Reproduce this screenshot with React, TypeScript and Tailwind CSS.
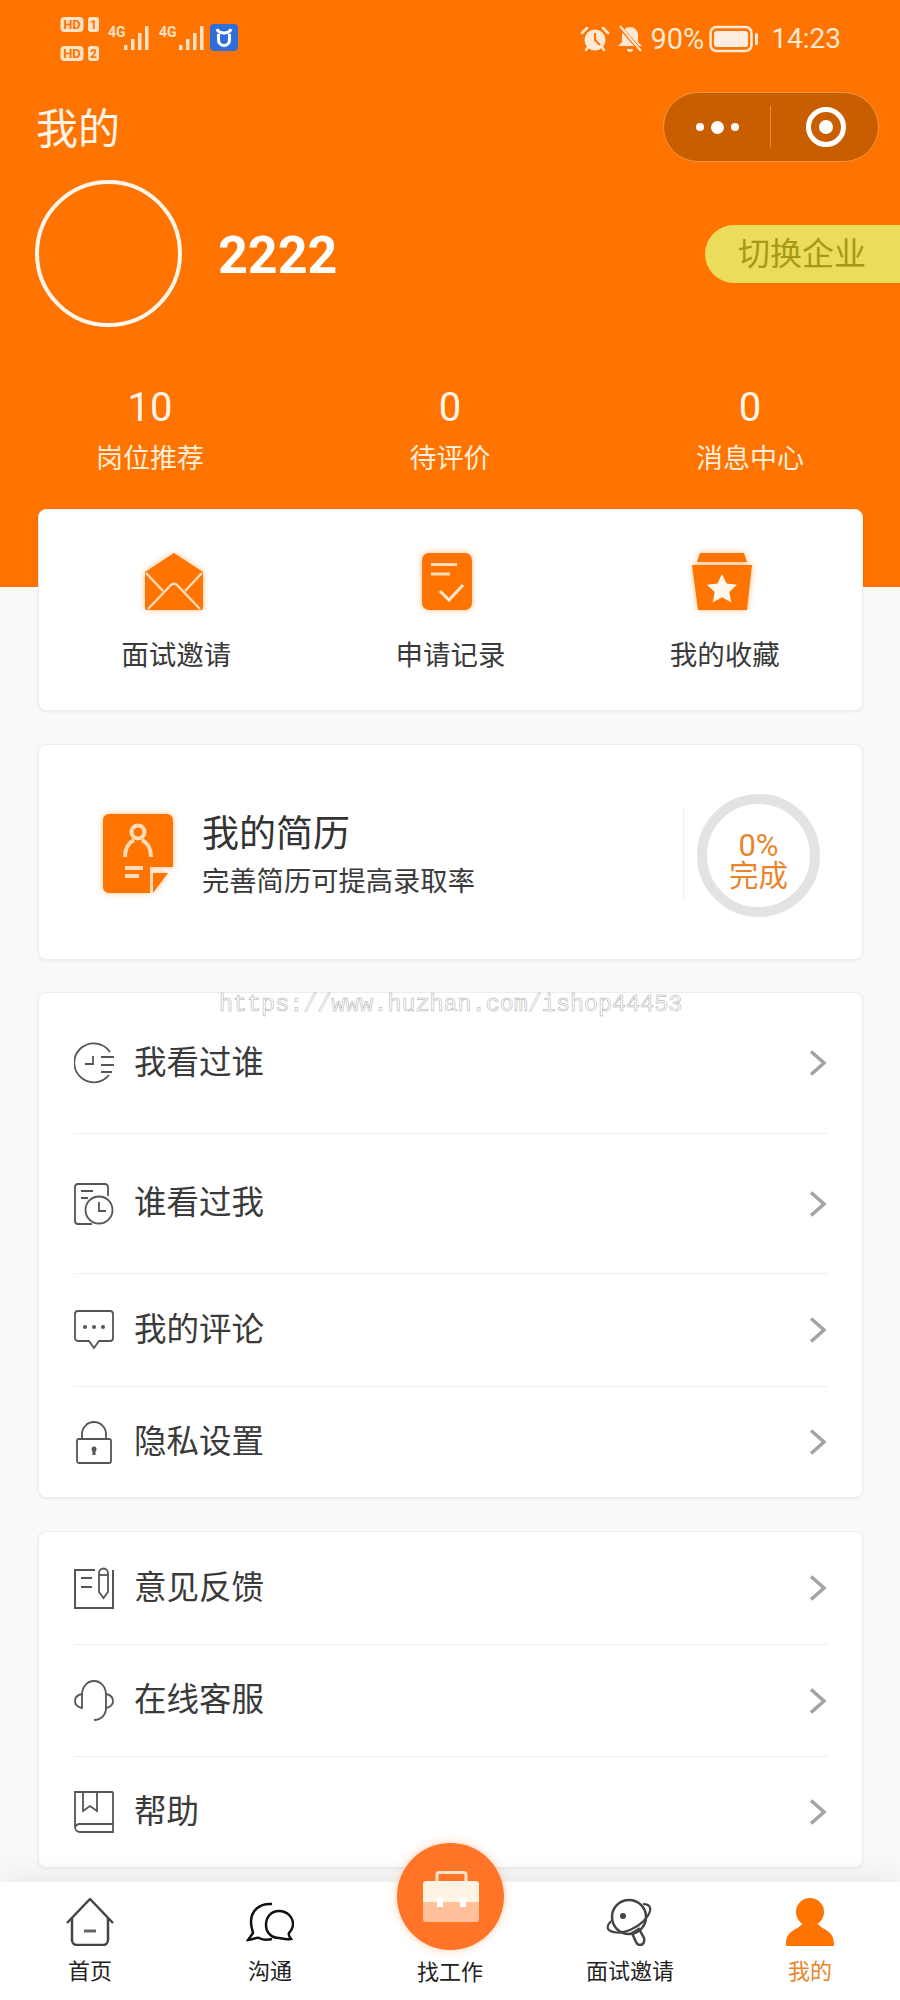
import React from "react";

const CJK = "font-['Roboto','Noto_Sans_CJK_SC',sans-serif]";

function StatusLeft() {
  const bars = (x: number, base: number) => [0, 1, 2, 3].map((i) => {
    const h = [5, 11, 17, 24][i];
    return <rect key={i} x={x + i * 7} y={base - h} width="3.5" height={h} fill="#ffe3c4" />;
  });
  return (
    <svg width="180" height="46" viewBox="0 0 180 46" className="ml-[60px] shrink-0">
      <rect x="0.5" y="1" width="23" height="15" rx="4" fill="#ffe3c4" />
      <text x="12" y="13" textAnchor="middle" fontSize="13" fontWeight="700" fill="#ff7300" fontFamily="Roboto">HD</text>
      <rect x="28" y="1" width="11" height="15" rx="3" fill="#ffe3c4" />
      <text x="33.5" y="13" textAnchor="middle" fontSize="12" fontWeight="700" fill="#ff7300" fontFamily="Roboto">1</text>
      <rect x="0.5" y="30" width="23" height="15" rx="4" fill="#ffe3c4" />
      <text x="12" y="42" textAnchor="middle" fontSize="13" fontWeight="700" fill="#ff7300" fontFamily="Roboto">HD</text>
      <rect x="28" y="30" width="11" height="15" rx="3" fill="#ffe3c4" />
      <text x="33.5" y="42" textAnchor="middle" fontSize="12" fontWeight="700" fill="#ff7300" fontFamily="Roboto">2</text>
      <text x="48" y="21" fontSize="14" fontWeight="700" fill="#ffe3c4" fontFamily="Roboto">4G</text>
      {bars(64, 34)}
      <text x="99" y="21" fontSize="14" fontWeight="700" fill="#ffe3c4" fontFamily="Roboto">4G</text>
      {bars(119, 34)}
      <rect x="150" y="8" width="28" height="27" rx="4" fill="#2f6fdc" />
      <path d="M157 13c1 3 3 4 7 4s6-1 7-4M158.500 18v6a5.500 5.500 0 0 0 11 0v-6" fill="none" stroke="#fff" strokeWidth="3" />
    </svg>
  );
}

function StatusRight() {
  return (
    <div className={`flex items-center ${CJK} text-[#ffe9d3]`}>
      <svg width="30" height="28" viewBox="0 0 30 28" className="mr-[7px]">
        <circle cx="15" cy="15" r="10.500" fill="#ffe9d3" />
        <path d="M15 8v7l5 5" fill="none" stroke="#ff7300" strokeWidth="2" />
        <path d="M2 8l5-5M28 8l-5-5M6 25l2-3M24 25l-2-3" stroke="#ffe9d3" strokeWidth="2.500" strokeLinecap="round" />
      </svg>
      <svg width="26" height="28" viewBox="0 0 26 28" className="mr-[7px]">
        <path d="M13 2a8 8 0 0 0-8 8v7l-4 4h24l-4-4v-7a8 8 0 0 0-8-8z" fill="#ffe9d3" />
        <path d="M10 24a3 3 0 0 0 6 0" fill="#ffe9d3" />
        <path d="M3 2l21 24" stroke="#ff7300" strokeWidth="4" />
        <path d="M3 1l21 25" stroke="#ffe9d3" strokeWidth="2" />
      </svg>
      <span className="text-[29px] leading-none">90%</span>
      <svg width="50" height="28" viewBox="0 0 50 28" className="ml-[5px]">
        <rect x="1.500" y="2" width="41" height="24" rx="6" fill="none" stroke="#ffe9d3" strokeWidth="2.500" />
        <rect x="5" y="6" width="34" height="16" rx="3" fill="#ffeee0" />
        <rect x="46" y="8" width="3" height="12" rx="1.500" fill="#ffe9d3" />
      </svg>
      <span className="ml-[12px] mr-[59px] text-[28px] leading-none">14:23</span>
    </div>
  );
}

function Capsule() {
  return (
    <div className="flex h-[70px] w-[216px] items-center rounded-[35px] border border-[#f0953f] bg-[#c85e00]">
      <div className="flex w-[107px] items-center justify-center gap-[7px] border-r border-r-[#e58a35] h-[42px] pl-[1px]">
        <span className="h-[8px] w-[8px] rounded-full bg-white" />
        <span className="h-[13px] w-[13px] rounded-full bg-white" />
        <span className="h-[8px] w-[8px] rounded-full bg-white" />
      </div>
      <div className="flex flex-1 items-center justify-center pl-[3px]">
        <span className="flex h-[40px] w-[40px] items-center justify-center rounded-full border-[5px] border-white">
          <span className="h-[14px] w-[14px] rounded-full bg-white" />
        </span>
      </div>
    </div>
  );
}

function Stat({ n, label }: { n: string; label: string }) {
  return (
    <div className="flex flex-col items-center text-white">
      <div className="h-[54px] pt-[3px] text-[40px] leading-[54px] text-[#fff5ea]">{n}</div>
      <div className="mt-[7px] h-[40px] text-[27px] leading-[40px] text-[#ffeeda]">{label}</div>
    </div>
  );
}

const glow = "drop-shadow-[0_0_3px_rgba(255,150,60,0.6)]";

const Envelope = () => (
  <svg width="58" height="57" viewBox="0 0 58 57" className={glow}>
    <path d="M29 0L58 19V55a2 2 0 0 1-2 2H2a2 2 0 0 1-2-2V19z" fill="#ff7300" />
    <path d="M1 20L18 38M57 20L40 38M3 56L26 32a4 4 0 0 1 6 0L55 56" fill="none" stroke="#ffdcb8" strokeWidth="2.500" />
  </svg>
);
const DocCheck = () => (
  <svg width="50" height="57" viewBox="0 0 50 57" className={glow}>
    <rect width="50" height="57" rx="7" fill="#ff7300" />
    <path d="M9 11.500H35M9 21H28" stroke="#ffdcb8" strokeWidth="3" />
    <path d="M18 38l9 9 14-15" fill="none" stroke="#ffe8d0" strokeWidth="3" />
  </svg>
);
const StarBox = () => (
  <svg width="60" height="57" viewBox="0 0 60 57" className={glow}>
    <path d="M8 0H52L55 9H5z" fill="#ff7300" />
    <path d="M0 12H60L55 57H6z" fill="#ff7300" />
    <path d="M30 21l4.500 9.500 10.500 1.300-7.700 7.200 2 10.500-9.300-5.200-9.300 5.200 2-10.500-7.700-7.200 10.500-1.300z" fill="#fff6ec" />
  </svg>
);
const Resume = () => (
  <svg width="70" height="80" viewBox="0 0 70 80" className={glow}>
    <path d="M6 0H64a6 6 0 0 1 6 6V53H47V79H6a6 6 0 0 1-6-6V6a6 6 0 0 1 6-6z" fill="#ff7300" />
    <circle cx="35" cy="18" r="6.500" fill="none" stroke="#ffdcb8" strokeWidth="4" />
    <path d="M22 43c0-10 5-15 9-17M48 43c0-10-5-15-9-17" fill="none" stroke="#ffdcb8" strokeWidth="4" />
    <path d="M22 54H40M22 62H36" stroke="#ffdcb8" strokeWidth="4" />
    <path d="M50 59H65L50 79z" fill="#ff7300" />
  </svg>
);

const stroke = { fill: "none", stroke: "#555", strokeWidth: 1.8 };

const I1 = () => (
  <svg width="40" height="42" viewBox="0 0 40 42" {...stroke}>
    <path d="M36 10A19.500 19.500 0 1 0 35 33" />
    <path d="M19 14V22H11M27 15H40M27 23H40M27 30H38" />
  </svg>
);
const I2 = () => (
  <svg width="40" height="42" viewBox="0 0 40 42" {...stroke}>
    <path d="M34 13V4a3 3 0 0 0-3-3H4a3 3 0 0 0-3 3V38a3 3 0 0 0 3 3H18" />
    <circle cx="25" cy="27" r="13.500" />
    <path d="M25 19V28H32M7 8H19M7 15H14" />
  </svg>
);
const I3 = () => (
  <svg width="40" height="40" viewBox="0 0 40 40" {...stroke}>
    <path d="M4 1H36a3 3 0 0 1 3 3V28a3 3 0 0 1-3 3H25L20 38L15 31H4a3 3 0 0 1-3-3V4a3 3 0 0 1 3-3z" />
    <circle cx="11" cy="17" r="2" fill="#555" stroke="none" />
    <circle cx="20" cy="17" r="2" fill="#555" stroke="none" />
    <circle cx="29" cy="17" r="2" fill="#555" stroke="none" />
  </svg>
);
const I4 = () => (
  <svg width="40" height="43" viewBox="0 0 40 43" {...stroke}>
    <rect x="3" y="18" width="34" height="24" rx="2" />
    <path d="M8 18V13a12 12 0 0 1 24 0V18" />
    <circle cx="20" cy="28" r="2.500" fill="#555" stroke="none" />
    <path d="M20 28V34" strokeWidth="3" />
  </svg>
);
const I5 = () => (
  <svg width="40" height="42" viewBox="0 0 40 42" {...stroke}>
    <path d="M21 3H1V41H39V3" strokeWidth="2" />
    <path d="M7 11H18M7 20H18" />
    <path d="M25 6a4.500 4.500 0 0 1 9 0V25L29.500 31L25 25z" />
    <path d="M25 8H34" />
  </svg>
);
const I6 = () => (
  <svg width="40" height="42" viewBox="0 0 40 42" {...stroke}>
    <path d="M8 15C8 7 13 1 20 1S32 7 32 15" />
    <path d="M8 14C3 15 1 18 1 21S3 27 8 28z" />
    <path d="M32 14C37 15 39 18 39 21S37 27 32 28z" />
    <path d="M32 28C32 35 27 40 20 40" />
  </svg>
);
const I7 = () => (
  <svg width="40" height="42" viewBox="0 0 40 42" {...stroke}>
    <path d="M39 1H1V36a5 5 0 0 0 5 5H39V33H6a5 5 0 0 0-5 4" />
    <path d="M39 1V33" />
    <path d="M9 1V20L16 15L23 20V1" />
  </svg>
);

const Chevron = () => (
  <svg width="18" height="26" viewBox="0 0 18 26" className="shrink-0">
    <path d="M2 1.500l13 11.500L2 24.500" fill="none" stroke="#a3a3a3" strokeWidth="3.500" strokeLinejoin="miter" />
  </svg>
);

function Row({ icon, label, h, last }: { icon: React.ReactNode; label: string; h: string; last?: boolean }) {
  return (
    <div className={`mx-[35px] flex items-center ${h} ${last ? "" : "border-b border-b-[#eeeeee]"}`}>
      <div className="flex w-[40px] shrink-0 items-center justify-center">{icon}</div>
      <div className="ml-[20px] flex-1 text-[32.500px] leading-none text-[#3a3a3a]">{label}</div>
      <Chevron />
    </div>
  );
}

const card = "rounded-[8px] border border-[#ebedf0] bg-white shadow-[0_1px_3px_rgba(0,0,0,0.06)]";

const TabHome = () => (
  <svg width="48" height="48" viewBox="0 0 48 48" fill="none" stroke="#444" strokeWidth="2.500">
    <path d="M1 25L24 1L47 25" strokeLinejoin="round" />
    <path d="M6 20V42a5 5 0 0 0 5 5H37a5 5 0 0 0 5-5V20" />
    <path d="M18 33H30" strokeWidth="3" stroke="#666" />
  </svg>
);
const TabChat = () => (
  <svg width="48" height="40" viewBox="0 0 48 40" fill="none" stroke="#111" strokeWidth="2.500">
    <path d="M26 2C13 1 5 9 5 20c0 6 2 9 2 11l-5 7c5 0 8-3 11-2 4 2 9 2 13 1" />
    <path d="M33 9c-8 0-13 6-13 14s6 13 13 13c3 0 5 2 12 1-2-3-3-4-2-6 3-3 4-6 4-9 0-7-6-13-14-13z" />
  </svg>
);
const TabBall = () => (
  <svg width="48" height="48" viewBox="0 0 48 48" fill="none" stroke="#444" strokeWidth="2.500">
    <circle cx="23" cy="19" r="17" />
    <circle cx="17" cy="18" r="3" fill="#444" stroke="none" />
    <path d="M37 6c6 0 8 3 7 7-2 7-10 15-20 19-9 4-19 3-22-1-1-3 0-5 3-8" strokeWidth="2.200" />
    <path d="M26 35l7-4 5 9c1 4-1 7-4 7-2 0-3-1-4-3z" />
  </svg>
);
const TabMe = () => (
  <svg width="48" height="48" viewBox="0 0 48 48">
    <ellipse cx="24" cy="14" rx="14" ry="14" fill="#ff7300" />
    <path d="M16 26C12 32 0 32 0 46v2H48v-2C48 32 36 32 32 26z" fill="#ff7300" />
  </svg>
);
const Case = () => (
  <svg width="56" height="51" viewBox="0 0 56 51">
    <rect x="14" y="1.500" width="29" height="11" rx="2" fill="none" stroke="#ffe4cc" strokeWidth="3" />
    <path d="M3 10H53a3 3 0 0 1 3 3V31H0V13a3 3 0 0 1 3-3z" fill="#fff3e4" />
    <path d="M0 31H56V48a3 3 0 0 1-3 3H3a3 3 0 0 1-3-3z" fill="#ffc09a" />
    <rect x="14" y="27" width="6" height="9" fill="#fff" />
    <rect x="37" y="27" width="6" height="9" fill="#fff" />
  </svg>
);

function Tab({ icon, label, color, gap }: { icon?: React.ReactNode; label: string; color?: string; gap?: string }) {
  return (
    <div className="flex flex-col items-center pt-[16px]">
      <div className="flex h-[48px] items-center justify-center">{icon}</div>
      <div className={`${gap ?? "mt-[11px]"} text-[22px] leading-[30px] ${color ?? "text-[#222]"}`}>{label}</div>
    </div>
  );
}

export default function App() {
  return (
    <div className={`relative flex h-[2000px] w-[900px] flex-col overflow-hidden bg-[#f8f9fb] ${CJK}`}>
      <header className="h-[587px] shrink-0 bg-[#ff7300]">
        <div className="flex h-[78px] items-center justify-between">
          <StatusLeft />
          <StatusRight />
        </div>
        <div className="mt-[14px] flex h-[70px] items-center justify-between pl-[36px] pr-[21px]">
          <div className="pt-[5px] text-[42px] leading-none text-[#fff5ea]">我的</div>
          <Capsule />
        </div>
        <div className="mt-[18px] flex h-[147px] items-center justify-between pl-[35px]">
          <div className="flex items-center">
            <div className="h-[147px] w-[147px] rounded-full border-[4px] border-[#fff5ea]" />
            <div className="ml-[36px] pt-[4px] text-[52px] font-bold leading-none text-white">2222</div>
          </div>
          <div className="flex h-[58px] w-[195px] items-center rounded-l-[29px] bg-[#ecdc5c] pl-[33px] text-[32px] leading-none text-[#a69a14]">切换企业</div>
        </div>
        <div className="mt-[51px] grid grid-cols-3">
          <Stat n="10" label="岗位推荐" />
          <Stat n="0" label="待评价" />
          <Stat n="0" label="消息中心" />
        </div>
      </header>

      <main className="-mt-[78px] flex flex-col gap-[33px] px-[38px] pr-[37px]">
        <section className={`${card} grid h-[202px] grid-cols-3`}>
          {[
            [<Envelope key="a" />, "面试邀请"],
            [<DocCheck key="b" />, "申请记录"],
            [<StarBox key="c" />, "我的收藏"],
          ].map(([ic, t], i) => (
            <div key={i} className="flex flex-col items-center pt-[43px]">
              <div className={`flex h-[57px] items-center justify-center ${i === 0 ? "pr-[4px]" : "pr-[6px]"}`}>{ic}</div>
              <div className="mt-[30px] text-[27.500px] leading-[32px] text-[#3a3a3a]">{t}</div>
            </div>
          ))}
        </section>

        <section className={`${card} flex h-[216px] items-center pl-[64px]`}>
          <div className="mt-[4px] shrink-0"><Resume /></div>
          <div className="ml-[29px] flex-1 pt-[8px]">
            <div className="text-[37px] leading-[44px] text-[#333]">我的简历</div>
            <div className="mt-[7px] text-[27.300px] leading-[36px] text-[#3a3a3a]">完善简历可提高录取率</div>
          </div>
          <div className="mt-[2px] h-[93px] w-px bg-[#eeeeee]" />
          <div className="ml-[13px] mr-[42px] mt-[6px] flex h-[123px] w-[123px] flex-col items-center justify-center rounded-full border-[10px] border-[#e3e3e3] pt-[12px] text-[#e8852b]">
            <div className="text-[31px] leading-[30px]">0%</div>
            <div className="text-[29.500px] leading-[30px]">完成</div>
          </div>
        </section>

        <section className={`${card} -mt-[1px]`}>
          <Row icon={<I1 />} label="我看过谁" h="h-[141px]" />
          <Row icon={<I2 />} label="谁看过我" h="h-[140px]" />
          <Row icon={<I3 />} label="我的评论" h="h-[113px]" />
          <Row icon={<I4 />} label="隐私设置" h="h-[110px]" last />
        </section>

        <section className={card}>
          <Row icon={<I5 />} label="意见反馈" h="h-[113px]" />
          <Row icon={<I6 />} label="在线客服" h="h-[112px]" />
          <Row icon={<I7 />} label="帮助" h="h-[110px]" last />
        </section>
      </main>

      <div className="absolute left-[219px] top-[991px] font-['Liberation_Mono',monospace] text-[23.400px] leading-[28px] text-transparent [-webkit-text-stroke:0.5px_#a8a8a8]">
        https://www.huzhan.com/ishop44453
      </div>

      <nav className="absolute bottom-0 left-0 right-0 grid h-[118px] grid-cols-5 bg-white shadow-[0_-10px_24px_rgba(0,0,0,0.05)]">
        <Tab icon={<TabHome />} label="首页" />
        <Tab icon={<TabChat />} label="沟通" />
        <div className="relative">
          <div className="absolute -top-[39px] left-[37px] flex h-[107px] w-[107px] items-center justify-center rounded-full bg-[#ff7427] shadow-[0_0_10px_rgba(255,150,80,0.45)]">
            <Case />
          </div>
          <Tab label="找工作" gap="mt-[12px]" />
        </div>
        <Tab icon={<TabBall />} label="面试邀请" />
        <Tab icon={<TabMe />} label="我的" color="text-[#e8852b]" />
      </nav>
    </div>
  );
}
